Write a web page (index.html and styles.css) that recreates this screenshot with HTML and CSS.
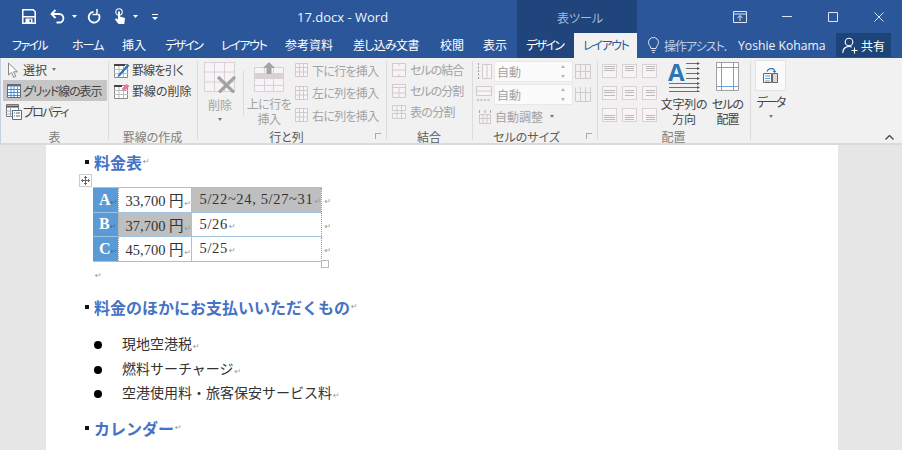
FILE: index.html
```html
<!DOCTYPE html>
<html lang="ja">
<head>
<meta charset="utf-8">
<title>17.docx - Word</title>
<link rel="stylesheet" href="styles.css">
</head>
<body>
<div class="app">
  <header class="titlebar">
    <div class="qat">
      <svg width="14" height="15" viewBox="0 0 14 15"><path d="M.8.800h10.400l2 2v11.400H.8z" fill="none" stroke="#fff" stroke-width="1.500"/><path d="M1 7h12v1.400H1zM3.500 9.500h7V14h-7z" fill="#fff"/><path d="M7.500 10.500H9V13H7.500z" fill="#2b579a"/></svg>
      <svg class="i-undo" width="15" height="15" viewBox="0 0 15 15"><path d="M1.500 5h7.700a4.200 4.200 0 0 1 0 8.500H6.500" fill="none" stroke="#fff" stroke-width="1.800"/><path d="M5.500 1L1.500 5l4 4" fill="none" stroke="#fff" stroke-width="1.800"/></svg>
      <svg class="i-caret" width="5" height="3" viewBox="0 0 5 3"><path d="M0 0h5L2.500 3z" fill="#fff"/></svg>
      <svg class="i-redo" width="14" height="15" viewBox="0 0 14 15"><path d="M6.500 2.800A5.400 5.400 0 1 0 11.500 5" fill="none" stroke="#fff" stroke-width="1.800"/><path d="M10 0v5.500H5.500" fill="none" stroke="#fff" stroke-width="1.500"/></svg>
      <svg class="i-touch" width="13" height="17" viewBox="0 0 13 17"><circle cx="5" cy="4" r="3.200" fill="none" stroke="#fff" stroke-width="1.100"/><path d="M4 3.500h2v5l5 1.500-.7 6H4.500L1 11.500 2 10.300l2 1.200z" fill="#fff"/></svg>
      <svg class="i-caret2" width="5" height="3" viewBox="0 0 5 3"><path d="M0 0h5L2.500 3z" fill="#fff"/></svg>
      <svg class="i-more" width="6" height="6" viewBox="0 0 6 6"><path d="M0 0h6v1H0zM0 3h6L3 6z" fill="#fff"/></svg>
    </div>
    <div class="doc-title">17.docx - Word</div>
    <div class="tool-context">表ツール</div>
    <div class="winbtns">
      <svg width="14" height="12" viewBox="0 0 14 12"><path d="M.5.500h13v11H.5zM.5 3h13M7 10V4.500M4.500 7L7 4.500 9.500 7" fill="none" stroke="#dfe6f1"/></svg>
      <svg class="w-min" width="10" height="1" viewBox="0 0 10 1"><path d="M0 0h10v1H0z" fill="#dfe6f1"/></svg>
      <svg class="w-max" width="10" height="10" viewBox="0 0 10 10"><path d="M.5.500h9v9h-9z" fill="none" stroke="#dfe6f1"/></svg>
      <svg class="w-close" width="10" height="10" viewBox="0 0 10 10"><path d="M.5.500l9 9M9.500.5l-9 9" stroke="#dfe6f1"/></svg>
    </div>
  </header>

  <nav class="tabs">
    <span class="tab t-file">ファイル</span>
    <span class="tab t-home">ホーム</span>
    <span class="tab t-ins">挿入</span>
    <span class="tab t-des">デザイン</span>
    <span class="tab t-lay">レイアウト</span>
    <span class="tab t-ref">参考資料</span>
    <span class="tab t-mail">差し込み文書</span>
    <span class="tab t-rev">校閲</span>
    <span class="tab t-view">表示</span>
    <span class="tab tool">デザイン</span>
    <span class="tab active">レイアウト</span>
    <span class="assist">
      <svg width="11" height="17" viewBox="0 0 11 17"><path d="M3 11.500C2.700 9 .5 8 .5 5.500a5 5 0 0 1 10 0C10.500 8 8.300 9 8 11.500zM3.500 13.500h4M4.500 15.500h2" fill="none" stroke="#dfe6f1"/></svg>
      <span class="assist-text">操作アシスト.</span>
    </span>
    <span class="user">Yoshie Kohama</span>
    <span class="share">
      <svg width="16" height="17" viewBox="0 0 16 17"><circle cx="7" cy="5" r="3.800" fill="none" stroke="#fff" stroke-width="1.100"/><path d="M.8 16c0-4 2.500-6.500 6.200-6.500 1 0 2 .2 2.800.6M12.500 10.500v6M9.500 13.500h6" fill="none" stroke="#fff" stroke-width="1.100"/></svg>
      <span>共有</span>
    </span>
  </nav>

  <section class="ribbon">
    <div class="group g-table">
      <div class="g-body col">
        <div class="row">
          <svg width="16" height="16" viewBox="0 0 16 16"><path d="M2.500 1v12l3-2.500 2.300 4.800 2-1-2.300-4.500h4z" fill="#fff" stroke="#888"/></svg>
          <span>選択</span><i class="caret"></i>
        </div>
        <div class="row selected">
          <svg width="16" height="16" viewBox="0 0 16 16"><path d="M1.500 1.500h13v13h-13z" fill="#fff" stroke="#5a6b85"/><path d="M1 2.500h14" stroke="#5a6b85" stroke-width="2"/><path d="M5 4v10M8 4v10M11.500 4v10M2 6.500h12M2 9.500h12M2 12.500h12" stroke="#4a90d9"/></svg>
          <span class="ls-11">グリッド線の表示</span>
        </div>
        <div class="row">
          <svg width="16" height="16" viewBox="0 0 16 16"><path d="M.5.500h12v12H.5z" fill="#fff" stroke="#777"/><path d="M.5 2.500h12" stroke="#555" stroke-width="2"/><path d="M4.500 4v9M0 7h12M0 10h12" stroke="#aaa"/><path d="M6.500 6.500h9v9h-9z" fill="#fff" stroke="#5a6b85"/><path d="M8 9h1M10 9h4M8 12h1M10 12h4" stroke="#5a6b85"/></svg>
          <span class="ls-18">プロパティ</span>
        </div>
      </div>
      <div class="g-label">表</div>
    </div>

    <div class="group g-draw">
      <div class="g-body col">
        <div class="row">
          <svg width="16" height="16" viewBox="0 0 16 16"><path d="M.5 2.500h13v13H.5z" fill="#fff" stroke="#888"/><path d="M0 3h11" stroke="#444" stroke-width="2"/><path d="M5 4v11M9.500 4v11M0 7.500h14M0 11.500h14" stroke="#bbb"/><path d="M4 13L13.500 2l2 1.500-9.500 10.500-2.500.8z" fill="#2e75b6"/></svg>
          <span class="ls-08">罫線を引く</span>
        </div>
        <div class="row">
          <svg width="16" height="16" viewBox="0 0 16 16"><path d="M.5 2.500h13v13H.5z" fill="#fff" stroke="#888"/><path d="M0 3h8" stroke="#444" stroke-width="2"/><path d="M5 4v11M9.500 4v11M0 7.500h14M0 11.500h14" stroke="#bbb"/><path d="M7.500 6l5-5 3 2-5 5z" fill="#e8789a"/></svg>
          <span>罫線の削除</span>
        </div>
      </div>
      <div class="g-label">罫線の作成</div>
    </div>

    <div class="group g-rows off">
      <div class="g-body rowsbody">
        <div class="big b-del">
          <svg width="32" height="31" viewBox="0 0 32 31"><path d="M.5.500h30v29H.5z" fill="#f7f3f6" stroke="#d8d2d6"/><path d="M10.500 0v30M20.500 0v30M0 10h31M0 20h31" stroke="#d8d2d6"/><path d="M14 15l16 15.500M31 15L15 30.500" stroke="#a3a3a3" stroke-width="3.200"/></svg>
          <span>削除</span><i class="caret lone"></i>
        </div>
        <div class="vrule"></div>
        <div class="big b-above">
          <svg width="30" height="30" viewBox="0 0 30 30"><path d="M.5 5.500h29v24H.5z" fill="#f7f3f6" stroke="#d8d2d6"/><path d="M0 11h30v6H0z" fill="#d8d2d6"/><path d="M10.500 6v24M19.500 6v24M0 23.500h30" stroke="#d8d2d6"/><path d="M15 0l6 6h-3.500v6h-5V6H9z" fill="#a3a3a3"/></svg>
          <span class="nw ls-05">上に行を<br>挿入</span>
        </div>
        <div class="small-col">
          <div class="row"><svg width="13" height="14" viewBox="0 0 13 14"><path d="M.5.500h12v13H.5zM4.500 0v14M8.500 0v14M0 4.500h13M0 9h13" fill="#f7f3f6" stroke="#d0cace"/></svg><span class="ls-07">下に行を挿入</span></div>
          <div class="row"><svg width="13" height="14" viewBox="0 0 13 14"><path d="M.5.500h12v13H.5zM4.500 0v14M8.500 0v14M0 4.500h13M0 9h13" fill="#f7f3f6" stroke="#d0cace"/></svg><span class="ls-07">左に列を挿入</span></div>
          <div class="row"><svg width="13" height="14" viewBox="0 0 13 14"><path d="M.5.500h12v13H.5zM4.500 0v14M8.500 0v14M0 4.500h13M0 9h13" fill="#f7f3f6" stroke="#d0cace"/></svg><span class="ls-07">右に列を挿入</span></div>
        </div>
      </div>
      <div class="g-label dark lab-rows">行と列<i class="launcher"></i></div>
    </div>

    <div class="group g-merge off">
      <div class="g-body col">
        <div class="row"><svg width="14" height="14" viewBox="0 0 14 14"><path d="M.5.500h13v13H.5zM0 7h14M7 0v3M7 11v3" fill="#f7f3f6" stroke="#d0cace"/></svg><span class="ls-10">セルの結合</span></div>
        <div class="row"><svg width="14" height="14" viewBox="0 0 14 14"><path d="M.5.500h13v13H.5zM0 3.500h14M7 4v10M0 9h14" fill="#f7f3f6" stroke="#d0cace"/></svg><span class="ls-10">セルの分割</span></div>
        <div class="row"><svg width="14" height="14" viewBox="0 0 14 14"><path d="M.5.500h13v5H.5zM.5 8.500h13v5H.5zM5 0v14M9.500 0v14" fill="#f7f3f6" stroke="#d0cace"/></svg><span class="ls-07">表の分割</span></div>
      </div>
      <div class="g-label dark">結合</div>
    </div>

    <div class="group g-size off">
      <div class="g-body sizebody">
        <div class="size-row">
          <svg width="16" height="18" viewBox="0 0 16 18"><path d="M6.500 2.500h9v14h-9zM11 2v15" fill="#f7f3f6" stroke="#d0cace"/><path d="M2.500 1v16" stroke="#999" stroke-dasharray="2 1.500"/></svg>
          <span class="spin"><span>自動</span><i class="arrows"></i></span>
          <svg width="16" height="15" viewBox="0 0 16 15"><path d="M.5.500h15v14H.5zM5.500 0v15M10.500 0v15M0 7.500h16" fill="none" stroke="#d0cace"/></svg>
        </div>
        <div class="size-row">
          <svg width="16" height="18" viewBox="0 0 16 18"><path d="M.5 1.500h15v9H.5zM0 6h16" fill="#f7f3f6" stroke="#d0cace"/><path d="M1 15h14" stroke="#999" stroke-dasharray="2 1.500"/></svg>
          <span class="spin"><span>自動</span><i class="arrows"></i></span>
          <svg width="16" height="15" viewBox="0 0 16 15"><path d="M.5.500v14h15V.5M5.500 0v15M10.500 0v15M0 5.500h16" fill="none" stroke="#d0cace"/></svg>
        </div>
        <div class="row auto">
          <svg width="14" height="15" viewBox="0 0 14 15"><path d="M1.500 5.500h11v9h-11zM5 5v10M9 5v10M1 9.500h12" fill="none" stroke="#d0cace"/><path d="M1.500 1v3M7 1v3M12.500 1v3" stroke="#a8a8a8"/></svg>
          <span>自動調整</span><i class="caret"></i>
        </div>
      </div>
      <div class="g-label dark lab-size">セルのサイズ<i class="launcher"></i></div>
    </div>

    <div class="group g-align">
      <div class="g-body alignbody">
        <div class="align-grid">
          <i class="al top"></i><i class="al top c"></i><i class="al top r"></i>
          <i class="al mid"></i><i class="al mid c"></i><i class="al mid r"></i>
          <i class="al bot"></i><i class="al bot c"></i><i class="al bot r"></i>
        </div>
        <div class="big b-dir">
          <span class="dir-icon">
            <span class="dir-a">A</span>
            <svg width="32" height="30" viewBox="0 0 32 30"><path d="M18 1.500h12M18 6.500h12M18 11.500h12M18 16.500h12M1 21.500h29M1 25.500h29M1 29.500h29" stroke="#6f6f6f" fill="none"/><path d="M29 0l3 1.500-3 1.500zM29 5l3 1.500-3 1.500zM29 10l3 1.500-3 1.500zM29 15l3 1.500-3 1.500zM29 20l3 1.500-3 1.500zM29 24l3 1.500-3 1.500zM29 28l3 1.500-3 1.500z" fill="#555"/></svg>
          </span>
          <span class="nw ls-03">文字列の<br>方向</span>
        </div>
        <div class="big b-margin">
          <svg width="23" height="30" viewBox="0 0 23 30"><path d="M.5.500h22v28H.5z" fill="#fff" stroke="#a0a0a0"/><path d="M5.500 1v27M17.500 1v27M1 5.500h21M1 24.500h21" stroke="#6fa3d8"/></svg>
          <span class="nw ls-10">セルの<br>配置</span>
        </div>
      </div>
      <div class="g-label">配置</div>
    </div>

    <div class="group g-data">
      <div class="g-body">
        <div class="big b-data">
          <span class="data-btn">
            <svg width="15" height="15" viewBox="0 0 15 15"><path d="M.5 5.500h8v9h-8z" fill="#fff" stroke="#666"/><path d="M9.500 5.500h5v9h-5z" fill="#d9d9d9" stroke="#666"/><path d="M2 8h5M2 10.500h5M2 13h5" stroke="#5b9bd5"/><path d="M4 3.500c1-3 6-4 7.500-1.500v2" fill="none" stroke="#2e75b6" stroke-width="1.200"/><path d="M9.500 3l2 2 2-2z" fill="#2e75b6"/></svg>
          </span>
          <span class="nw ls-20">データ</span><i class="caret lone"></i>
        </div>
      </div>
      <div class="g-label"></div>
    </div>
    <div class="collapse">
      <svg width="9" height="5" viewBox="0 0 9 5"><path d="M.5 4.500l4-4 4 4" fill="none" stroke="#444" stroke-width="1.300"/></svg>
    </div>
  </section>

  <main class="workspace">
    <article class="page">
      <h2 class="h"><b class="sq"></b>料金表<u class="pm">↵</u></h2>
      <div class="table-wrap">
        <span class="move"><svg width="9" height="9" viewBox="0 0 9 9"><path d="M4.500 0v9M0 4.500h9" stroke="#666"/><path d="M3 1.500h3M3 7.500h3M1.500 3v3M7.500 3v3" stroke="#666"/></svg></span>
        <table class="fee">
          <tr><th>A<u class="pm">↵</u></th><td class="c2">33,700 円<u class="pm">↵</u></td><td class="c3 shade">5/22~24, 5/27~31<u class="pm">↵</u></td><td class="end"><u class="pm">↵</u></td></tr>
          <tr><th>B<u class="pm">↵</u></th><td class="c2 shade">37,700 円<u class="pm">↵</u></td><td class="c3">5/26<u class="pm">↵</u></td><td class="end"><u class="pm">↵</u></td></tr>
          <tr><th>C<u class="pm">↵</u></th><td class="c2">45,700 円<u class="pm">↵</u></td><td class="c3">5/25<u class="pm">↵</u></td><td class="end"><u class="pm">↵</u></td></tr>
        </table>
        <span class="resize"></span>
      </div>
      <p class="blank"><u class="pm">↵</u></p>
      <h2 class="h h2"><b class="sq"></b>料金のほかにお支払いいただくもの<u class="pm">↵</u></h2>
      <ul class="list">
        <li>現地空港税<u class="pm">↵</u></li>
        <li>燃料サーチャージ<u class="pm">↵</u></li>
        <li>空港使用料・旅客保安サービス料<u class="pm">↵</u></li>
      </ul>
      <h2 class="h h3"><b class="sq"></b>カレンダー<u class="pm">↵</u></h2>
    </article>
  </main>
</div>
</body>
</html>
```
FILE: styles.css
```css
* { box-sizing: border-box; }
html, body { margin: 0; padding: 0; }
body { width: 902px; height: 450px; overflow: hidden; font-family: "Noto Sans CJK JP", "Noto Sans", sans-serif; font-size: 12px; color: #444; }
.app { width: 902px; height: 450px; display: flex; flex-direction: column; background: #e6e6e6; }
.titlebar, .tabs, .ribbon { font-feature-settings: "palt"; }
.ls-03 { letter-spacing: -.3px; }
.ls-05 { letter-spacing: -.5px; }
.ls-07 { letter-spacing: -.7px; }
.ls-08 { letter-spacing: -.8px; }
.ls-10 { letter-spacing: -1px; }
.ls-11 { letter-spacing: -1.100px; }
.ls-18 { letter-spacing: -1.800px; }
.ls-20 { letter-spacing: -2px; }

.titlebar { height: 33px; background: #2b579a; display: flex; align-items: center; color: #fff; flex: none; }
.qat { display: flex; align-items: center; width: 292px; padding-left: 22px; flex: none; }
.i-undo { margin-left: 14px; }
.i-caret { margin-left: 7px; }
.i-redo { margin-left: 10px; }
.i-touch { margin-left: 13px; }
.i-caret2 { margin-left: 6px; }
.i-more { margin-left: 14px; }
.doc-title { width: 225px; flex: none; font-family: "Open Sans", sans-serif; font-size: 13px; color: #f2f5fa; padding-left: 5px; }
.tool-context { width: 120px; height: 33px; flex: none; background: #20447c; color: #a9bbd6; line-height: 36px; padding-left: 40px; font-size: 12px; }
.winbtns { display: flex; align-items: center; flex: 1; padding-left: 96px; }
.w-min { margin-left: 35px; }
.w-max { margin-left: 36px; }
.w-close { margin-left: 36px; }

.tabs { height: 25px; background: #2b579a; display: flex; align-items: center; flex: none; font-size: 12px; color: #fff; }
.tab { height: 25px; line-height: 23px; flex: none; white-space: nowrap; }
.t-file { margin-left: 12px; width: 60px; letter-spacing: -1.700px; }
.t-home { width: 50px; letter-spacing: -1px; }
.t-ins { width: 43px; }
.t-des { width: 56px; letter-spacing: -1.700px; }
.t-lay { width: 64px; letter-spacing: -1.400px; }
.t-ref { width: 68px; }
.t-mail { width: 87px; letter-spacing: -.7px; }
.t-rev { width: 43px; }
.t-view { width: 34px; }
.tool { background: #20447c; width: 57px; padding-left: 9px; letter-spacing: -1.700px; }
.active { background: #f1f1f1; color: #2b579a; width: 63px; padding-left: 9px; letter-spacing: -1.400px; }
.assist { display: flex; align-items: center; gap: 5px; width: 101px; padding-left: 11px; color: #c4d1e4; flex: none; white-space: nowrap; }
.assist-text { letter-spacing: -1px; }
.user { width: 98px; font-family: "Open Sans", sans-serif; font-size: 12.200px; color: #f0f3f8; flex: none; white-space: nowrap; }
.share { background: #1c4478; height: 24px; width: 55px; display: flex; align-items: center; gap: 3px; padding-left: 6px; flex: none; align-self: flex-start; }

.ribbon { height: 87px; background: #f1f1f1; border-bottom: 2px solid #dadada; border-left: 1px solid #c4d1e4; display: flex; flex: none; }
.ribbon svg { flex: none; }
.group { height: 85px; flex: none; display: flex; flex-direction: column; position: relative; }
.group + .group::before { content: ""; position: absolute; left: 0; top: 3px; bottom: 3px; width: 1px; background: #dcdcdc; }
.g-body { height: 72px; flex: none; }
.g-label { height: 13px; line-height: 13px; text-align: center; color: #808080; font-size: 12px; position: relative; }
.g-label.dark { color: #5c5c5c; }
.lab-rows { padding-right: 10px; }
.lab-size { padding-right: 16px; }
.col { display: flex; flex-direction: column; padding-top: 1px; }
.row { display: flex; align-items: center; height: 21px; white-space: nowrap; flex: none; }
.caret { display: inline-block; width: 0; height: 0; border: 2.500px solid transparent; border-top: 3px solid #777; border-bottom: 0; margin-left: 4px; }
.caret.lone { display: block; margin: 6px auto 0; }
.off { color: #a3a3a3; }
.launcher { position: absolute; right: 5px; top: 3px; width: 6px; height: 6px; border-left: 1px solid #aaa; border-top: 1px solid #aaa; }
.nw { white-space: nowrap; }

.g-table { width: 107px; }
.g-table .row { padding-left: 5px; gap: 1px; }
.g-table .row.selected { background: #c6c6c6; margin: 0 1px 0 2px; padding-left: 3px; }
.g-draw { width: 89px; }
.g-draw .row { padding-left: 6px; gap: 2px; }
.g-rows { width: 189px; }
.rowsbody { display: flex; padding-left: 7px; }
.big { display: flex; flex-direction: column; align-items: center; line-height: 15px; text-align: center; flex: none; padding-top: 4px; }
.big svg { display: block; margin-bottom: 4px; }
.b-del { width: 32px; }
.vrule { width: 1px; height: 46px; background: #dcdcdc; margin: 12px 0 0 7px; flex: none; }
.b-above { width: 42px; margin-left: 4px; }
.small-col { display: flex; flex-direction: column; margin-left: 5px; padding-top: 1px; }
.small-col .row { height: 22.500px; gap: 4px; }
.g-merge { width: 86px; }
.g-merge .row { padding-left: 6px; gap: 4px; }
.g-size { width: 125px; }
.sizebody { padding-top: 1.500px; display: flex; flex-direction: column; }
.size-row { display: flex; align-items: center; height: 23px; padding-left: 4px; gap: 2px; flex: none; }
.spin { width: 79px; height: 21px; background: #fbfbfb; border: 1px solid #e8e8e8; display: flex; align-items: center; justify-content: space-between; padding: 0 6px 0 2px; line-height: 19px; flex: none; }
.arrows { width: 5px; height: 11px; position: relative; display: block; }
.arrows::before, .arrows::after { content: ""; position: absolute; left: 0; border: 2.500px solid transparent; }
.arrows::before { top: -1px; border-bottom: 3px solid #b5b5b5; border-top: 0; }
.arrows::after { bottom: -1px; border-top: 3px solid #b5b5b5; border-bottom: 0; }
.auto { padding-left: 6px; gap: 3px; }
.g-align { width: 153px; color: #444; }
.alignbody { display: flex; padding-left: 5px; }
.align-grid { display: grid; grid-template-columns: repeat(3, 15px); grid-auto-rows: 14px; column-gap: 5px; row-gap: 8px; margin-top: 6px; width: 55px; flex: none; align-self: flex-start; }
.al { display: block; height: 14px; border: 1px solid #d8d2d6; background-color: #f7f3f6; background-repeat: no-repeat; background-image: linear-gradient(#bbb, #bbb), linear-gradient(#bbb, #bbb), linear-gradient(#bbb, #bbb); }
.al { --w: 11px; --x: 1px; background-size: var(--w) 1px, var(--w) 1px, var(--w) 1px; }
.al.c { --w: 9px; --x: 2px; }
.al.r { --w: 9px; --x: 3px; }
.al.top { background-position: var(--x) 1px, var(--x) 3px, var(--x) 5px; }
.al.mid { background-position: var(--x) 3px, var(--x) 5px, var(--x) 8px; }
.al.bot { background-position: var(--x) 6px, var(--x) 8px, var(--x) 10px; }
.b-dir { width: 46px; margin-left: 4px; }
.dir-icon { display: block; position: relative; height: 30px; width: 32px; margin-bottom: 4px; }
.dir-icon svg { margin: 0; }
.dir-a { position: absolute; left: 0; top: -3px; font: bold 24px/26px "Open Sans", sans-serif; color: #2e75b6; }
.b-margin { width: 29px; margin-left: 6px; }
.g-data { width: 40px; }
.b-data { width: 31px; margin-left: 5px; padding-top: 2px; }
.data-btn { width: 31px; height: 31px; background: #fafafa; border: 1px solid #e2e2e2; display: flex; align-items: center; justify-content: center; margin-bottom: 3px; flex: none; }
.data-btn svg { margin: 0; }
.collapse { margin-left: auto; padding: 77px 8px 0 0; }
.collapse svg { display: block; }

.workspace { flex: 1; background: #e6e6e6; padding-left: 46px; overflow: hidden; }
.page { width: 792px; height: 320px; background: #fff; padding: 5px 0 0 39px; font-family: "Liberation Serif", "Noto Sans CJK JP", serif; font-size: 14px; color: #333; }
.pm { text-decoration: none; color: #999; font: 8px/1 "DejaVu Sans", sans-serif; margin-left: 1px; letter-spacing: 0; word-spacing: 0; }
.h { margin: 0; height: 24px; font: bold 16px/24px "Noto Sans CJK JP", sans-serif; color: #4472c4; display: flex; align-items: center; white-space: nowrap; }
.sq { width: 4px; height: 4px; background: #111; margin-right: 5px; flex: none; }
.table-wrap { position: relative; margin-left: 8px; margin-top: 13px; width: 239px; height: 74px; }
.move { position: absolute; left: -14px; top: -13px; width: 13px; height: 13px; background: #fff; border: 1px solid #ccc; display: flex; align-items: center; justify-content: center; }
.move svg { display: block; }
.resize { position: absolute; left: 228px; top: 73px; width: 8px; height: 8px; border: 1px solid #bbb; background: #fff; }
.fee { border-collapse: collapse; font-size: 14.500px; table-layout: fixed; width: 239px; }
.fee th { width: 25px; height: 24.500px; padding: 0 0 0 6px; text-align: left; white-space: nowrap; background: #5b9bd5; color: #fff; font-size: 16px; border-top: 1px solid #9dc3e6; border-bottom: 1px solid #9dc3e6; }
.fee th .pm { color: #3f6f9f; margin-left: 0; }
.fee td { padding: 0 0 0 7px; height: 24.500px; border: 1px solid #9dc3e6; white-space: nowrap; }
.fee .c2 { width: 73px; border-left: 1px dotted #aaa; border-right: 1px dotted #999; }
.fee .c3 { width: 130px; padding-left: 8px; border-right: 1px dotted #999; letter-spacing: .65px; }
.fee .end { width: 11px; border: 0; padding: 0 0 0 2px; }
.shade { background: #bfbfbf; }
.blank { margin: 0; height: 22px; padding: 5px 0 0 9px; line-height: 16px; }
.h2 { margin-top: 12px; }
.list { margin: 14px 0 0; padding: 0; list-style: none; }
.list li { height: 24.500px; line-height: 24.500px; padding-left: 37px; font-size: 14px; position: relative; white-space: nowrap; }
.list li::before { content: ""; position: absolute; left: 9px; top: 8px; width: 8px; height: 8px; border-radius: 50%; background: #000; }
.h3 { margin-top: 9.500px; }
```
